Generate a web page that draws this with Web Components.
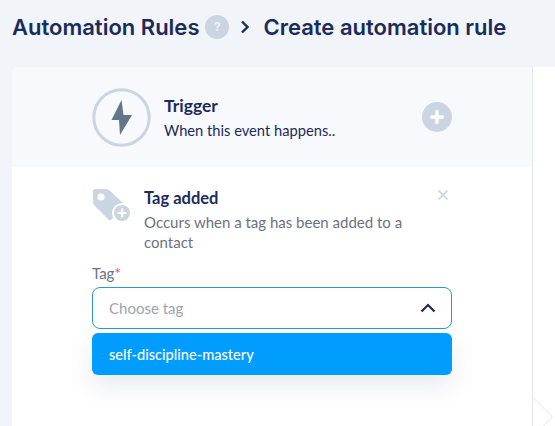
<!DOCTYPE html>
<html>
<head>
<meta charset="utf-8">
<title>Create automation rule</title>
<style>
  html, body { margin: 0; height: 100%; overflow: hidden; }
  body { background: #f1f4f9; font-family: "Lato", "Liberation Sans", sans-serif; }
</style>
</head>
<body>
<rule-page>
  <rule-title slot="title"></rule-title>
  <trigger-head></trigger-head>
  <tag-panel></tag-panel>
</rule-page>

<script>
class RulePage extends HTMLElement {
  connectedCallback() {
    this.attachShadow({ mode: 'open' });
    this.shadowRoot.innerHTML = `
      <style>
        :host { display: flex; flex-direction: column; height: 426px; overflow: hidden; }
        .top { padding: 15px 0 0 12px; height: 67px; box-sizing: border-box; }
        .board { flex: 1; display: flex; margin-left: 12px; position: relative; background: #fff; border-top-left-radius: 6px; }
        .col { width: 520px; display: flex; flex-direction: column; }
        .rest { flex: 1; border-left: 1px solid #e5e7ec; background: #fff; }
        .notch { position: absolute; left: 520px; top: 330px; }
      </style>
      <div class="top"><slot name="title"></slot></div>
      <div class="board">
        <div class="col"><slot></slot></div>
        <div class="rest"></div>
        <svg class="notch" width="23" height="30" viewBox="0 0 23 30" fill="none">
          <path d="M0.5 0 L20.5 20 L11 29.5" stroke="#e3e5eb" stroke-width="1"/>
        </svg>
      </div>
    `;
  }
}

class RuleTitle extends HTMLElement {
  connectedCallback() {
    this.attachShadow({ mode: 'open' });
    this.shadowRoot.innerHTML = `
      <style>
        :host { display: flex; align-items: center; height: 24px; color: #1b2b5b; font: 600 22px/24px "Inter", "Liberation Sans", sans-serif; white-space: nowrap; }
        .help { width: 24px; height: 24px; border-radius: 50%; background: #cbd5e1; color: #eef2f6; font: 700 12px/24px "Inter", sans-serif; text-align: center; margin-left: 6px; }
        svg { margin: 0 14px 0 12px; }
      </style>
      <span>Automation Rules</span>
      <span class="help">?</span>
      <svg width="8" height="14" viewBox="0 0 8 14" fill="none"><path d="M1 1.5 L6.5 7 L1 12.5" stroke="#1b2b5b" stroke-width="2.4"/></svg>
      <span>Create automation rule</span>
    `;
  }
}

class TriggerHead extends HTMLElement {
  connectedCallback() {
    this.attachShadow({ mode: 'open' });
    this.shadowRoot.innerHTML = `
      <style>
        :host { display: flex; align-items: center; height: 100px; background: #f8f9fc; padding-left: 80px; box-sizing: border-box; border-top-left-radius: 6px; }
        .ring { width: 59px; height: 59px; flex: none; }
        .txt { margin-left: 13px; width: 258px; color: #1b2b5b; }
        .name { font: 700 17.5px/20px "Lato", sans-serif; margin-top: 1px; }
        .sub { font: 400 14.7px/20px "Lato", sans-serif; margin-top: 4px; }
        .add { width: 30px; height: 30px; flex: none; }
      </style>
      <svg class="ring" viewBox="0 0 59 59" fill="none">
        <circle cx="29.5" cy="29.5" r="27.7" stroke="#cbd5e1" stroke-width="3"/>
        <path d="M29.5 12 L19.5 32 H27 L28 47 L40 27 H31.5 Z" fill="#64748b"/>
      </svg>
      <div class="txt">
        <div class="name">Trigger</div>
        <div class="sub">When this event happens..</div>
      </div>
      <svg class="add" viewBox="0 0 30 30"><circle cx="15" cy="15" r="15" fill="#cbd5e1"/><path d="M15 9.5 V20.5 M9.5 15 H20.5" stroke="#fff" stroke-width="3.4" stroke-linecap="round"/></svg>
    `;
  }
}

class TagPanel extends HTMLElement {
  connectedCallback() {
    this.attachShadow({ mode: 'open' });
    this.shadowRoot.innerHTML = `
      <style>
        :host { display: block; width: 360px; margin-left: 80px; padding-top: 21px; color: #1b2b5b; }
        .head { display: flex; position: relative; }
        .ico { width: 40px; height: 36px; flex: none; margin: 0 12px 0 0; }
        .name { font: 700 16.5px/20px "Lato", sans-serif; }
        .desc { font: 400 15px/20px "Lato", sans-serif; color: #6b7280; margin-top: 4px; width: 270px; }
        .close { position: absolute; right: 3px; top: 1px; }
        label { display: block; margin-top: 11px; font: 400 15px/20px "Lato", sans-serif; color: #6b7280; }
        label b { color: #f43f5e; font-weight: 400; }
        .box { display: flex; align-items: center; justify-content: space-between; height: 42px; box-sizing: border-box; margin-top: 4px; padding: 0 15px 0 16px; border: 1px solid #2f96cf; border-radius: 8px; background: #fff; color: #9ca3af; font: 400 15px "Lato", sans-serif; }
        .opt { margin-top: 4px; height: 42px; padding: 0 17px; display: flex; align-items: center; background: #009dff; color: #fff; border-radius: 6px; font: 500 14.6px "Lato", sans-serif; box-shadow: 0 10px 24px rgba(30, 40, 70, .10); }
      </style>
      <div class="head">
        <svg class="ico" viewBox="0 0 40 36">
          <path d="M1 3 Q1 1 3 1 L14 1 Q16 1 17.5 2.5 L31 15 Q33 17 31 19 L20 31 Q18.5 33 16.5 31.5 L3 18 Q1 16.5 1 14 Z" fill="#cbd5e1"/>
          <circle cx="9" cy="9" r="3.6" fill="#fff"/>
          <circle cx="30" cy="25" r="10" fill="#fff"/>
          <circle cx="30" cy="25" r="8" fill="#cbd5e1"/>
          <path d="M30 20.5 V29.5 M25.5 25 H34.5" stroke="#fff" stroke-width="2.2"/>
        </svg>
        <div>
          <div class="name">Tag added</div>
          <div class="desc">Occurs when a tag has been added to a contact</div>
        </div>
        <svg class="close" width="12" height="12" viewBox="0 0 12 12" fill="none"><path d="M1.5 1.5 L10.5 10.5 M10.5 1.5 L1.5 10.5" stroke="#cbd5e1" stroke-width="1.7"/></svg>
      </div>
      <label>Tag<b>*</b></label>
      <div class="box">
        <span>Choose tag</span>
        <svg width="16" height="10" viewBox="0 0 16 10" fill="none"><path d="M1.5 8.5 L8 2 L14.5 8.5" stroke="#1b2b5b" stroke-width="2.2"/></svg>
      </div>
      <div class="opt">self-discipline-mastery</div>
    `;
  }
}

customElements.define('rule-page', RulePage);
customElements.define('rule-title', RuleTitle);
customElements.define('trigger-head', TriggerHead);
customElements.define('tag-panel', TagPanel);
</script>
</body>
</html>
